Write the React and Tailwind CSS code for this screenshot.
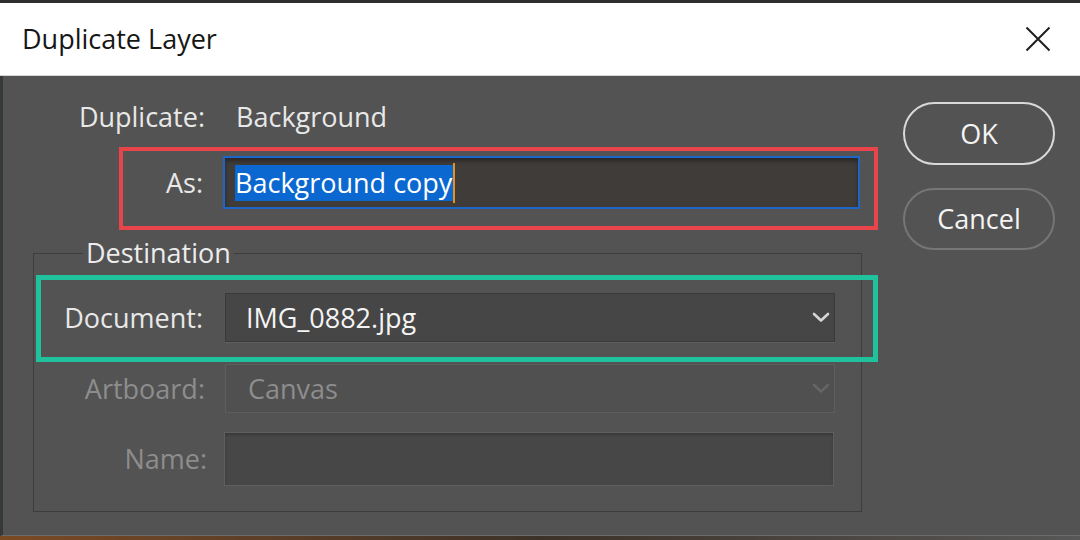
const font = { fontFamily: '"Open Sans", "Noto Sans", sans-serif' };

function Chevron({ className }) {
    return (
        <svg width="18" height="11" viewBox="0 0 18 11" className={className}>
            <path d="M2 2 L9 8.5 L16 2" fill="none" stroke="currentColor" strokeWidth="2.6" strokeLinecap="round" strokeLinejoin="round" />
        </svg>
    );
}

function CloseGlyph() {
    return (
        <svg width="26" height="26" viewBox="0 0 26 26" className="text-[#1e1e1e]">
            <path d="M1.5 1.5 L24.5 24.5 M24.5 1.5 L1.5 24.5" stroke="currentColor" strokeWidth="2" />
        </svg>
    );
}

function PillButton({ children, strong }) {
    return (
        <button
            className={
                strong
                    ? 'w-[152px] h-[63px] rounded-full border-2 border-[#d9d9d9] text-[27px] leading-[36px] text-[#f4f4f4]'
                    : 'w-[152px] h-[62px] rounded-full border-2 border-[#767676] text-[27px] leading-[36px] text-[#f4f4f4]'
            }
        >
            {children}
        </button>
    );
}

export default function App() {
    return (
        <div className="w-[1080px] h-[540px] flex flex-col overflow-hidden bg-[#3a3a3a]" style={font}>
            <div className="h-[3px] bg-[#2c2f2e]" />

            {/* title bar */}
            <div className="h-[73px] flex items-center justify-between pl-[22px] pr-[29px] bg-white border-b border-[#d4d4d4]">
                <span className="text-[27px] leading-[36px] text-[#161616]">Duplicate Layer</span>
                <CloseGlyph />
            </div>

            {/* dialog body */}
            <div className="flex-1 flex bg-[#535353] border-l-[3px] border-[#353938] border-b border-b-[#6b6b6b] text-[27px] leading-[36px] text-[#e8e8e8]">
                <div className="w-[900px] flex flex-col">
                    <div className="mt-[23px] flex">
                        <span className="w-[202px] text-right">Duplicate:</span>
                        <span className="ml-[31px]">Background</span>
                    </div>

                    {/* name field */}
                    <div className="mt-[12px] ml-[116px] w-[759px] h-[83px] border-4 border-[#e9444a] pt-[5px]">
                        <div className="flex">
                            <span className="w-[80px] h-[53px] flex items-center justify-end">As:</span>
                            <div className="ml-[20px] w-[637px] h-[53px] border-2 border-[#1d66c8] bg-[#3f3c3a] shadow-[inset_0_3px_4px_rgba(0,0,0,0.35)] flex items-center pl-[10px]">
                                <span className="bg-[#0b68d1] text-white h-[36px] pr-[1px]">Background copy</span>
                                <span className="w-[2px] h-[40px] bg-[#e8901e]" />
                            </div>
                        </div>
                    </div>

                    <fieldset className="mt-[5px] ml-[30px] w-[829px] min-w-0 border border-[#3d3d3d] pb-[25px]">
                        <legend className="ml-[49px] px-[3px] text-[#ececec]">Destination</legend>

                        {/* document select */}
                        <div className="mt-[4px] ml-[2px] w-[842px] h-[87px] border-[5px] border-[#1fc29d] pt-[13px]">
                            <div className="flex items-center">
                                <span className="w-[162px] text-right">Document:</span>
                                <div className="ml-[22px] w-[610px] h-[49px] bg-[#464646] border border-[#3a3a3a] shadow-[0_1px_0_#5f5f5f] flex items-center justify-between pl-[20px] pr-[4px] text-[#f4f4f4]">
                                    <span>IMG_0882.jpg</span>
                                    <Chevron className="text-[#d6d6d6]" />
                                </div>
                            </div>
                        </div>

                        <div className="mt-[2px] flex items-center text-[#8d8d8d]">
                            <span className="w-[171px] text-right">Artboard:</span>
                            <div className="ml-[20px] w-[610px] h-[49px] bg-[#505050] border border-[#5e5e5e] flex items-center justify-between pl-[22px] pr-[4px]">
                                <span>Canvas</span>
                                <Chevron className="text-[#656565]" />
                            </div>
                        </div>

                        <div className="mt-[19px] flex items-center text-[#8d8d8d]">
                            <span className="w-[173px] text-right">Name:</span>
                            <div className="ml-[17px] w-[610px] h-[54px] bg-[#474747] border border-[#5f5f5f] shadow-[inset_0_2px_3px_rgba(0,0,0,0.2)]" />
                        </div>
                    </fieldset>
                </div>

                {/* actions */}
                <div className="mt-[26px] flex flex-col gap-[23px]">
                    <PillButton strong>OK</PillButton>
                    <PillButton>Cancel</PillButton>
                </div>
            </div>

            <div className="h-[4px] bg-gradient-to-r from-[#7b4a22] via-[#3d3228] to-[#575757]" />
        </div>
    );
}
